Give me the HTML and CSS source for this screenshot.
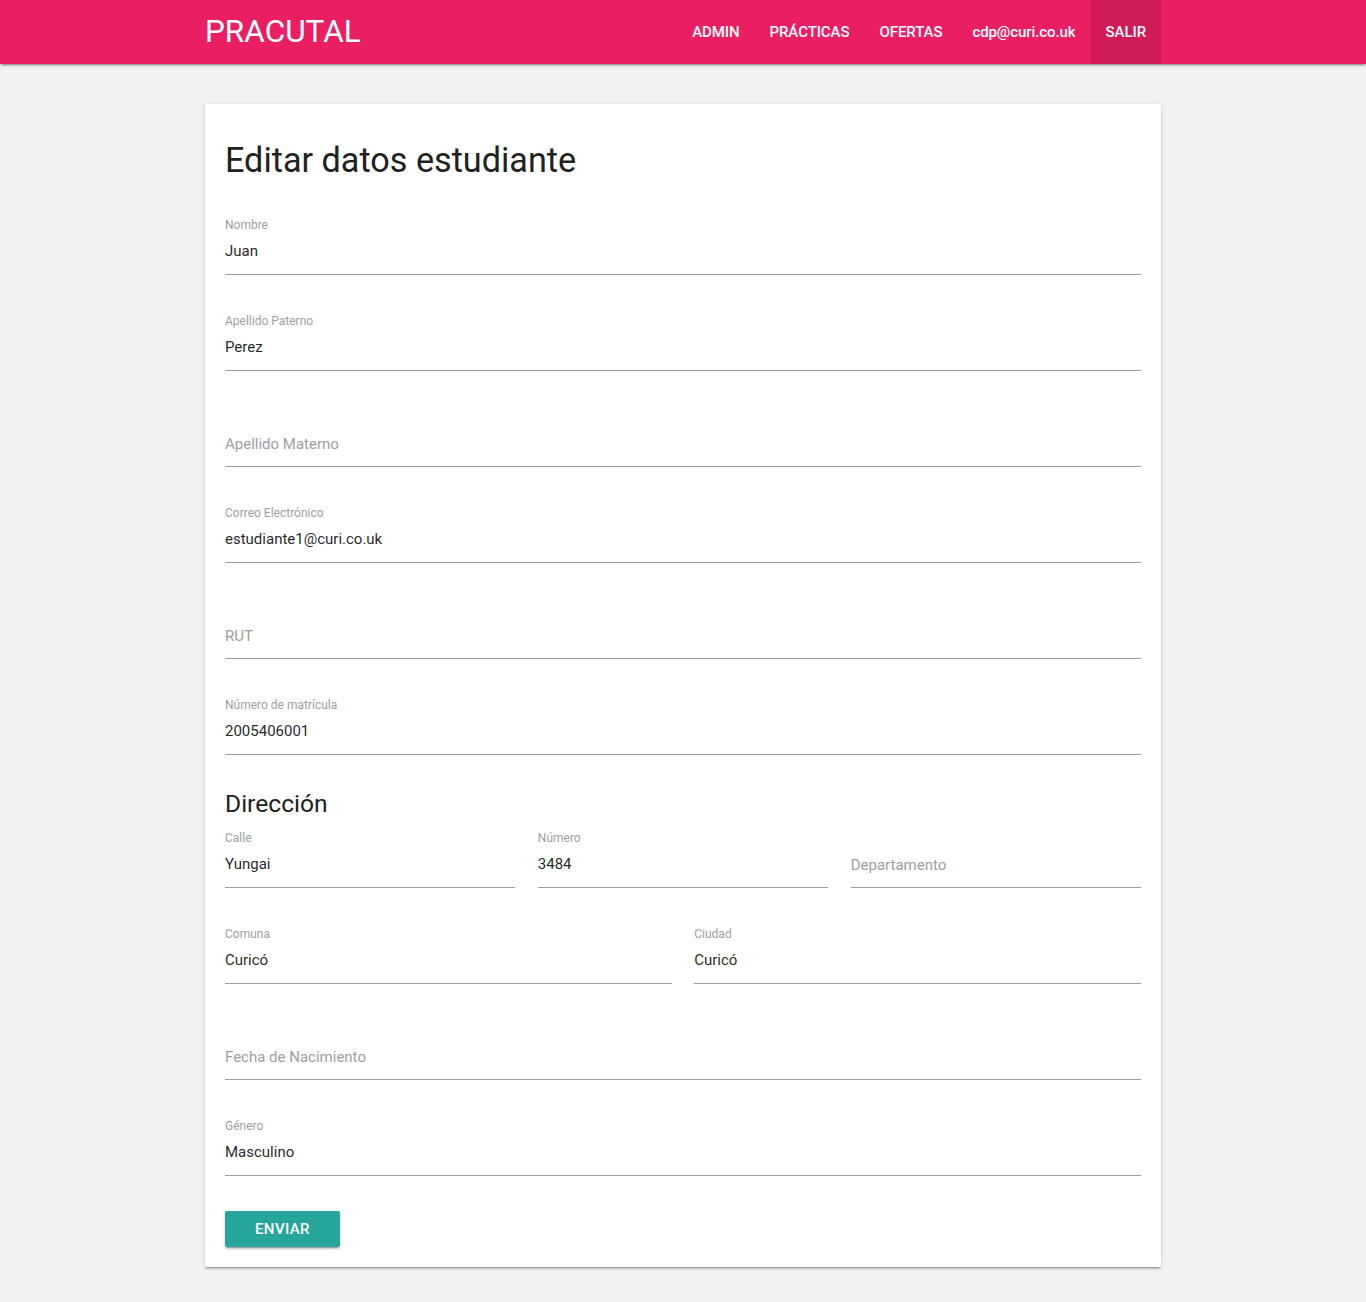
FILE: index.html
```html
<!DOCTYPE html>
<html lang="es">
<head>
<meta charset="utf-8">
<title>PRACUTAL</title>
<link rel="stylesheet" href="styles.css">
</head>
<body>
<nav class="navbar">
  <div class="container nav-inner">
    <a class="brand" href="#">PRACUTAL</a>
    <ul class="nav-links">
      <li><a href="#">ADMIN</a></li>
      <li><a href="#">PRÁCTICAS</a></li>
      <li><a href="#">OFERTAS</a></li>
      <li><a href="#" class="lower">cdp@curi.co.uk</a></li>
      <li><a href="#" class="active">SALIR</a></li>
    </ul>
  </div>
</nav>
<main class="container main">
  <div class="card">
    <h4 class="title">Editar datos estudiante</h4>
    <form class="form">
      <div class="field top">
        <label class="lbl">Nombre</label>
        <input class="inp" type="text" value="Juan">
      </div>
      <div class="field">
        <label class="lbl">Apellido Paterno</label>
        <input class="inp" type="text" value="Perez">
      </div>
      <div class="field">
        <label class="lbl"></label>
        <input class="inp empty" type="text" placeholder="Apellido Materno">
      </div>
      <div class="field">
        <label class="lbl">Correo Electrónico</label>
        <input class="inp" type="text" value="estudiante1@curi.co.uk">
      </div>
      <div class="field">
        <label class="lbl"></label>
        <input class="inp empty" type="text" placeholder="RUT">
      </div>
      <div class="field">
        <label class="lbl">Número de matrícula</label>
        <input class="inp" type="text" value="2005406001">
      </div>
      <h5 class="subtitle">Dirección</h5>
      <div class="row row3">
        <div class="field first">
          <label class="lbl">Calle</label>
          <input class="inp" type="text" value="Yungai">
        </div>
        <div class="field first">
          <label class="lbl">Número</label>
          <input class="inp" type="text" value="3484">
        </div>
        <div class="field first">
          <label class="lbl"></label>
          <input class="inp empty" type="text" placeholder="Departamento">
        </div>
      </div>
      <div class="row row2">
        <div class="field">
          <label class="lbl">Comuna</label>
          <input class="inp" type="text" value="Curicó">
        </div>
        <div class="field">
          <label class="lbl">Ciudad</label>
          <input class="inp" type="text" value="Curicó">
        </div>
      </div>
      <div class="field">
        <label class="lbl"></label>
        <input class="inp empty" type="text" placeholder="Fecha de Nacimiento">
      </div>
      <div class="field">
        <label class="lbl">Género</label>
        <input class="inp" type="text" value="Masculino">
      </div>
      <div class="actions">
        <button type="button" class="btn">ENVIAR</button>
      </div>
    </form>
  </div>
</main>
</body>
</html>
```

FILE: styles.css
```css
html, body {
  margin: 0;
  padding: 0;
}
body {
  background: #f2f2f2;
  font-family: Roboto, "Liberation Sans", sans-serif;
  font-size: 15px;
  color: rgba(0, 0, 0, 0.87);
}
.container {
  width: 956px;
  margin: 0 auto;
}
.navbar {
  background: #e91e63;
  height: 64px;
  box-shadow: 0 2px 2px 0 rgba(0,0,0,0.14), 0 1px 5px 0 rgba(0,0,0,0.12), 0 3px 1px -2px rgba(0,0,0,0.2);
}
.nav-inner {
  display: flex;
  justify-content: space-between;
  align-items: stretch;
  height: 64px;
}
.brand {
  color: #fff;
  text-decoration: none;
  font-size: 31.5px;
  line-height: 64px;
  padding-left: 0;
}
.nav-links {
  display: flex;
  list-style: none;
  margin: 0;
  padding: 0;
}
.nav-links a {
  display: block;
  padding: 0 15px;
  line-height: 64px;
  color: #fff;
  text-decoration: none;
  font-size: 15px;
  font-weight: 500;
  letter-spacing: -0.08px;
}
.nav-links a.active {
  background: rgba(0, 0, 0, 0.1);
}
.main {
  padding-top: 40px;
  padding-bottom: 35px;
}
.card {
  background: #fff;
  border-radius: 2px;
  padding: 20px;
  box-shadow: 0 2px 2px 0 rgba(0,0,0,0.14), 0 1px 5px 0 rgba(0,0,0,0.12), 0 3px 1px -2px rgba(0,0,0,0.2);
}
.title {
  font-size: 34.2px;
  font-weight: 400;
  line-height: 40px;
  margin: 16px 0 0;
  color: #212121;
}
.form {
  display: flex;
  flex-direction: column;
}
.field {
  display: flex;
  flex-direction: column;
  margin-top: 39px;
}
.field.top {
  margin-top: 38px;
}
.field.first {
  margin-top: 12px;
}
.lbl {
  display: block;
  font-size: 12px;
  line-height: 14px;
  height: 14px;
  color: #9e9e9e;
}
.inp {
  display: block;
  width: 100%;
  box-sizing: content-box;
  height: 38px;
  padding: 0 0 4px;
  margin: 0;
  border: none;
  border-bottom: 1px solid #9e9e9e;
  background: transparent;
  font-family: Roboto, "Liberation Sans", sans-serif;
  font-size: 15px;
  color: rgba(0, 0, 0, 0.87);
  outline: none;
}
.inp.empty {
  height: 37px;
  padding-top: 1px;
}
.inp::placeholder {
  color: #9e9e9e;
  opacity: 1;
}
.subtitle {
  font-size: 24.6px;
  font-weight: 400;
  line-height: 30px;
  margin: 34px 0 0;
  color: #212121;
}
.row {
  display: grid;
  column-gap: 22.5px;
}
.row3 {
  grid-template-columns: repeat(3, 1fr);
}
.row2 {
  grid-template-columns: repeat(2, 1fr);
}
.actions {
  margin-top: 35px;
}
.btn {
  background: #26a69a;
  color: #fff;
  border: none;
  border-radius: 2px;
  height: 36px;
  padding: 0 30px;
  font-family: Roboto, "Liberation Sans", sans-serif;
  font-size: 15px;
  font-weight: 500;
  letter-spacing: 0.4px;
  cursor: pointer;
  box-shadow: 0 2px 2px 0 rgba(0,0,0,0.14), 0 1px 5px 0 rgba(0,0,0,0.12), 0 3px 1px -2px rgba(0,0,0,0.2);
}
```
